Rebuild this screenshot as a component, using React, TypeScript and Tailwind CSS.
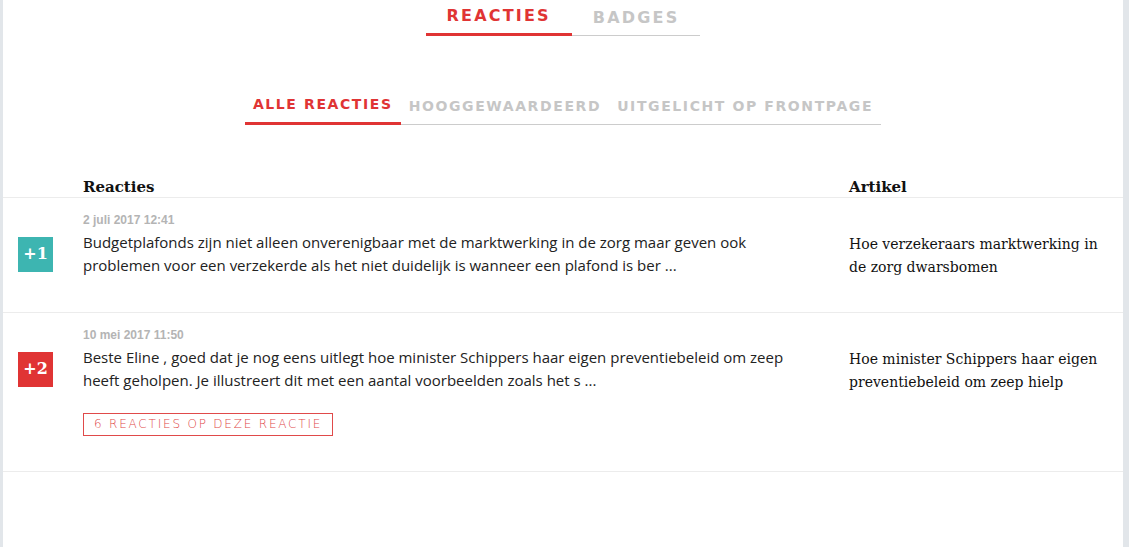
import React from "react";

const rows = [
  {
    score: "+1",
    badge: "bg-[#3db5b1]",
    date: "2 juli 2017 12:41",
    text: "Budgetplafonds zijn niet alleen onverenigbaar met de marktwerking in de zorg maar geven ook problemen voor een verzekerde als het niet duidelijk is wanneer een plafond is ber ...",
    artikel: "Hoe verzekeraars marktwerking in de zorg dwarsbomen",
    replies: null as string | null,
  },
  {
    score: "+2",
    badge: "bg-[#e03434]",
    date: "10 mei 2017 11:50",
    text: "Beste Eline , goed dat je nog eens uitlegt hoe minister Schippers haar eigen preventiebeleid om zeep heeft geholpen. Je illustreert dit met een aantal voorbeelden zoals het s ...",
    artikel: "Hoe minister Schippers haar eigen preventiebeleid om zeep hielp",
    replies: "6 REACTIES OP DEZE REACTIE",
  },
];

export default function App() {
  const serif = { fontFamily: '"DejaVu Serif", serif' };
  return (
    <div className="flex h-[547px] w-full bg-[#e2e6ea] pl-[3px] pr-[6px]">
      <div className="flex-1 bg-white">
        {/* top tabs */}
        <div className="flex items-end justify-center pt-[6px] font-['DejaVu_Sans',sans-serif] text-[16px] font-bold leading-[20px] tracking-[2.2px]">
          <div className="border-b-[3px] border-[#e03434] px-[21px] pb-[7px] text-[#e03434]">REACTIES</div>
          <div className="border-b border-[#cccccc] px-[21px] pb-[7px] text-[#c6c6c6]">BADGES</div>
        </div>

        {/* sub tabs */}
        <div className="mt-[59px] flex items-end justify-center font-['DejaVu_Sans',sans-serif] text-[14px] font-bold leading-[18px] tracking-[1.6px]">
          <div className="border-b-[3px] border-[#e03434] px-[8px] pb-[9px] text-[#e03434]">ALLE REACTIES</div>
          <div className="flex border-b border-[#cccccc] pb-[9px] text-[#c6c6c6]">
            <div className="px-[8px]">HOOGGEWAARDEERD</div>
            <div className="px-[8px]">UITGELICHT OP FRONTPAGE</div>
          </div>
        </div>

        {/* table header */}
        <div className="mt-[52px] flex border-b border-[#ececec] text-[15px] font-bold leading-[20px] text-[#111]" style={serif}>
          <div className="w-[80px] shrink-0" />
          <div className="w-[736px] shrink-0">Reacties</div>
          <div className="ml-[30px] w-[254px] shrink-0">Artikel</div>
        </div>

        {rows.map((r) => (
          <div key={r.date} className="flex flex-col border-b border-[#ececec] pt-[14px] pb-[35px]">
            <div className="pl-[80px] font-['Liberation_Sans',Arial,sans-serif] text-[12px] font-bold leading-[16px] text-[#b4b4b4]">
              {r.date}
            </div>
            <div className="mt-[3px] flex items-center">
              <div className="w-[80px] shrink-0 pl-[15px]">
                <div
                  className={`flex h-[35px] w-[35px] items-center justify-center ${r.badge} text-[16px] font-bold text-white`}
                  style={serif}
                >
                  {r.score}
                </div>
              </div>
              <div className="w-[736px] shrink-0 font-['Open_Sans',sans-serif] text-[15px] leading-[23px] text-[#222]">
                {r.text}
              </div>
              <div className="ml-[30px] -mb-[2px] w-[254px] shrink-0 pt-[2px] text-[14px] leading-[23px] text-[#111]" style={serif}>
                {r.artikel}
              </div>
            </div>
            {r.replies && (
              <div className="mt-[18px] pl-[80px]">
                <div className="inline-flex h-[23px] items-center border border-[#e04a4a] px-[10px] font-['DejaVu_Sans',sans-serif] text-[12px] font-extralight tracking-[1.8px] text-[#e04848]">
                  {r.replies}
                </div>
              </div>
            )}
          </div>
        ))}
      </div>
    </div>
  );
}
